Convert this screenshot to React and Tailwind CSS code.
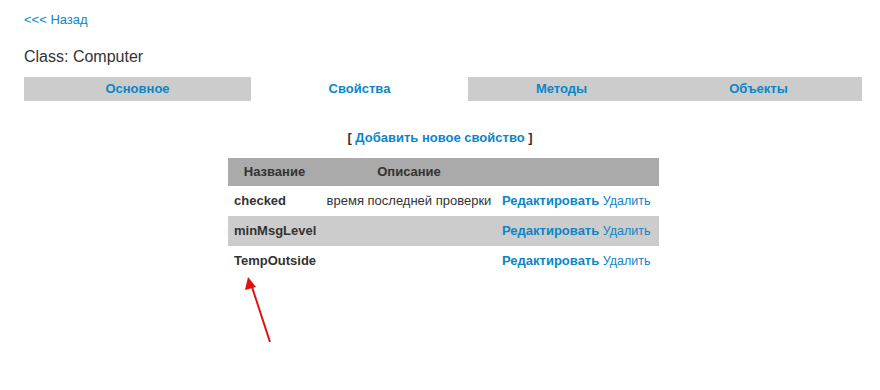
import React from "react";

const tabs = [
  { label: "Основное", w: "w-[227px]", active: false },
  { label: "Свойства", w: "w-[217px]", active: true },
  { label: "Методы", w: "w-[187px]", active: false },
  { label: "Объекты", w: "w-[207px]", active: false },
];

const rows = [
  { name: "checked", desc: "время последней проверки", shade: false },
  { name: "minMsgLevel", desc: "", shade: true },
  { name: "TempOutside", desc: "", shade: false },
];

const App = () => {
  return (
    <div className="relative w-[880px] h-[390px] bg-white text-[#333] font-['Liberation_Sans',Arial,sans-serif]">
      <div className="px-6 pt-[12px]">
        {/* Back link */}
        <div className="text-[13px] leading-[16px]">
          <a href="#" className="text-[#0a86c8]">
            &lt;&lt;&lt; Назад
          </a>
        </div>

        {/* Title */}
        <div className="mt-[19px] text-[16px] leading-[20px] text-[#333]">Class: Computer</div>

        {/* Tabs */}
        <div className="mt-[10px] flex h-6">
          {tabs.map((t) => (
            <div
              key={t.label}
              className={`${t.w} shrink-0 flex items-center justify-center text-[13px] font-bold text-[#0a86c8] ${
                t.active ? "bg-white" : "bg-[#cccccc]"
              }`}
            >
              {t.label}
            </div>
          ))}
        </div>

        {/* Add property */}
        <div className="mt-[29px] text-center text-[13px] font-bold leading-[16px]">
          <span className="text-[#333]">[ </span>
          <a href="#" className="text-[#0a86c8]">
            Добавить новое свойство
          </a>
          <span className="text-[#333]"> ]</span>
        </div>

        {/* Properties table */}
        <div className="mt-[12px] ml-[204px] w-[431px] text-[13px] leading-[16px]">
          <div className="flex h-7 items-center bg-[#aaaaaa] font-bold text-[#333]">
            <div className="w-[93px] text-center">Название</div>
            <div className="w-[176px] text-center">Описание</div>
            <div className="flex-1" />
          </div>
          {rows.map((r) => (
            <div
              key={r.name}
              className={`flex h-[30px] items-center ${r.shade ? "bg-[#cccccc]" : "bg-white"}`}
            >
              <div className="w-[93px] pl-[6px] font-bold text-[#333]">{r.name}</div>
              <div className="w-[176px] text-center text-[#333]">{r.desc}</div>
              <div className="flex-1 pl-[5px] whitespace-nowrap text-[#0a86c8]">
                <a href="#" className="font-bold">Редактировать</a>{" "}
                <a href="#" className="text-[12.5px]">Удалить</a>
              </div>
            </div>
          ))}
        </div>
      </div>

      {/* Annotation arrow */}
      <svg className="absolute left-0 top-0" width="880" height="390" viewBox="0 0 880 390">
        <line x1="270" y1="342" x2="252" y2="287" stroke="#e01010" strokeWidth="2" />
        <polygon points="248,277 245,290 256,287" fill="#e01010" />
      </svg>
    </div>
  );
};

export default App;
